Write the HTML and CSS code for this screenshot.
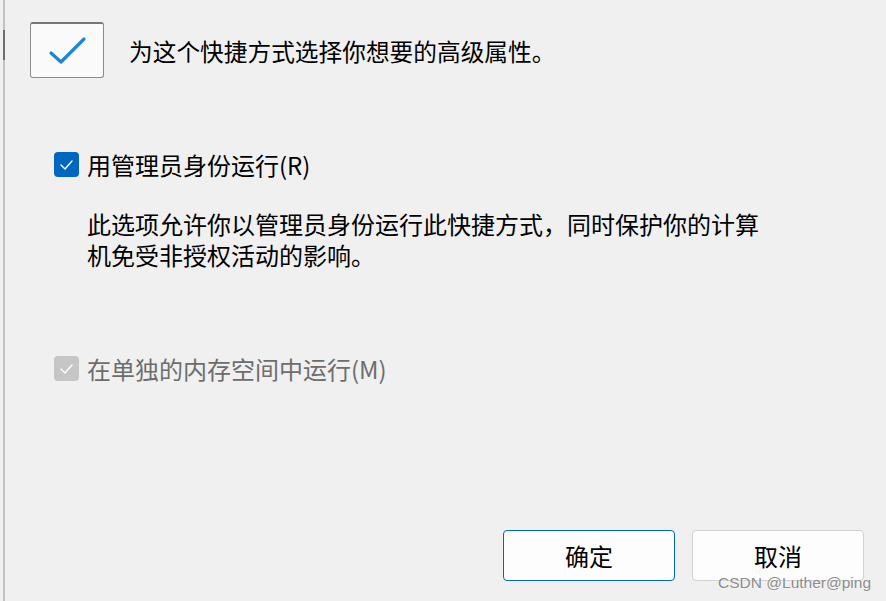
FILE: index.html
```html
<!DOCTYPE html>
<html lang="zh-CN">
<head>
    <meta charset="UTF-8">
    <meta name="viewport" content="width=device-width, initial-scale=1.0">
    <title>高级属性</title>
    <link rel="stylesheet" href="styles.css">
</head>
<body>

    <div class="dialog">
        <div class="header">
            <div class="shield">
                <svg width="74" height="56" viewBox="0 0 74 56">
                    <polyline points="20,30 30,39 53,16" fill="none" stroke="#1a86d6" stroke-width="3.2" stroke-linecap="round" stroke-linejoin="round"/>
                </svg>
            </div>
            <p class="title">为这个快捷方式选择你想要的高级属性。</p>
        </div>

        <label class="option">
            <span class="box checked">
                <svg width="25" height="25" viewBox="0 0 25 25"><polyline points="7,13 11,17 18,9" fill="none" stroke="#fff" stroke-width="1.4" stroke-linecap="round" stroke-linejoin="round"/></svg>
            </span>
            <span class="label">用管理员身份运行(R)</span>
        </label>

        <p class="desc">此选项允许你以管理员身份运行此快捷方式，同时保护你的计算<br>机免受非授权活动的影响。</p>

        <label class="option disabled">
            <span class="box">
                <svg width="25" height="25" viewBox="0 0 25 25"><polyline points="7,13 11,17 18,9" fill="none" stroke="#fff" stroke-width="1.4" stroke-linecap="round" stroke-linejoin="round"/></svg>
            </span>
            <span class="label">在单独的内存空间中运行(M)</span>
        </label>

        <div class="footer">
            <button class="btn primary" type="button">确定</button>
            <button class="btn" type="button">取消</button>
        </div>

        <span class="watermark">CSDN @Luther@ping</span>
    </div>

</body>
</html>
```

FILE: styles.css
```css
html, body {
    margin: 0;
    padding: 0;
    background-color: #f0f0f0;
}

body {
    font-family: "Noto Sans CJK SC", "Liberation Sans", sans-serif;
    color: #000;
}

.dialog {
    position: relative;
    box-sizing: border-box;
    height: 601px;
    margin-left: 3px;
    border-left: 2px solid #c3c3c3;
    padding-top: 22px;
    display: flex;
    flex-direction: column;
}

.dialog::before {
    content: "";
    position: absolute;
    left: -2px;
    top: 30px;
    width: 2px;
    height: 30px;
    background-color: #6e6e6e;
}

.header {
    display: flex;
    align-items: center;
    height: 56px;
    padding-left: 25px;
}

.shield {
    box-sizing: border-box;
    width: 74px;
    height: 56px;
    background-color: #fafafa;
    border: 1px solid #8c8c8c;
    border-top: 2px solid #767676;
    border-radius: 3px;
    overflow: hidden;
}

.shield svg {
    display: block;
    margin-top: -1px;
}

.title {
    margin: 2px 0 0 25px;
    font-size: 23.7px;
    line-height: 30px;
}

.option {
    display: flex;
    align-items: center;
    gap: 8px;
    padding-left: 49px;
    height: 25px;
    margin-top: 74px;
}

.box {
    width: 25px;
    height: 25px;
    border-radius: 4px;
    background-color: #c6c6c6;
}

.box svg {
    display: block;
}

.box.checked {
    background-color: #0067c0;
}

.label {
    font-size: 24px;
    line-height: 25px;
}

.disabled {
    margin-top: 86px;
}

.disabled .label {
    color: #6d6d6d;
}

.desc {
    margin: 31px 0 0 82px;
    font-size: 24px;
    line-height: 31px;
}

.footer {
    margin-top: auto;
    display: flex;
    justify-content: flex-end;
    gap: 17px;
    padding: 0 22px 20px 0;
}

.btn {
    box-sizing: border-box;
    width: 172px;
    height: 51px;
    background-color: #fdfdfd;
    border: 1px solid #d2d2d2;
    border-radius: 4px;
    font-family: "Noto Sans CJK SC", sans-serif;
    font-size: 24px;
    color: #000;
    padding: 0;
}

.btn.primary {
    border-color: #0067c0;
}

.watermark {
    position: absolute;
    right: 15px;
    bottom: 9px;
    font-family: "Liberation Sans", sans-serif;
    font-size: 15.5px;
    color: #8c8c8c;
    text-shadow: 0 0 2px #fff;
}
```
